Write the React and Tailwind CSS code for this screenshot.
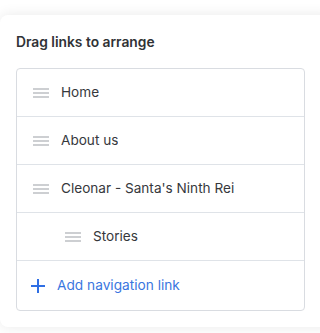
import React from "react";

function Grip() {
  return (
    <svg width="16" height="10" viewBox="0 0 16 10" className="shrink-0">
      <rect x="0" y="0.5" width="16" height="1" fill="#9ca0a6" />
      <rect x="0" y="4.5" width="16" height="1" fill="#9ca0a6" />
      <rect x="0" y="8.5" width="16" height="1" fill="#9ca0a6" />
    </svg>
  );
}

function Row({ label, indent }) {
  return (
    <div className={`flex h-12 items-center border-b border-[#dfe3e8] ${indent ? "pl-[48px]" : "pl-[16px]"}`}>
      <Grip />
      <span className="ml-3 whitespace-nowrap overflow-hidden text-[13.6px] text-[#36383c]">{label}</span>
    </div>
  );
}

export default function App() {
  return (
    <div className="min-h-[333px] w-[320px] overflow-hidden bg-white pt-[15px]" style={{ fontFamily: "Inter, 'Noto Sans', sans-serif" }}>
      <div className="w-[335px] rounded-[8px] bg-white pb-4 shadow-[0_0_14px_rgba(0,0,0,0.09)]">
        <div className="px-4 pt-[17px] pb-[16px] text-[13.8px] leading-[20px] font-semibold text-[#303236]">Drag links to arrange</div>
        <div className="mx-4 w-[289px] overflow-hidden rounded-[4px] border border-[#d9dce1]">
          <Row label="Home" />
          <Row label="About us" />
          <Row label="Cleonar - Santa's Ninth Rei" />
          <Row label="Stories" indent />
          <div className="flex h-[49px] items-center pl-[13px]">
            <svg width="16" height="16" viewBox="0 0 16 16" className="shrink-0">
              <rect x="7" y="1" width="2" height="14" fill="#2f6fe4" />
              <rect x="1" y="7" width="14" height="2" fill="#2f6fe4" />
            </svg>
            <span className="ml-[11px] text-[13.7px] text-[#3a76e0]">Add navigation link</span>
          </div>
        </div>
      </div>
    </div>
  );
}
